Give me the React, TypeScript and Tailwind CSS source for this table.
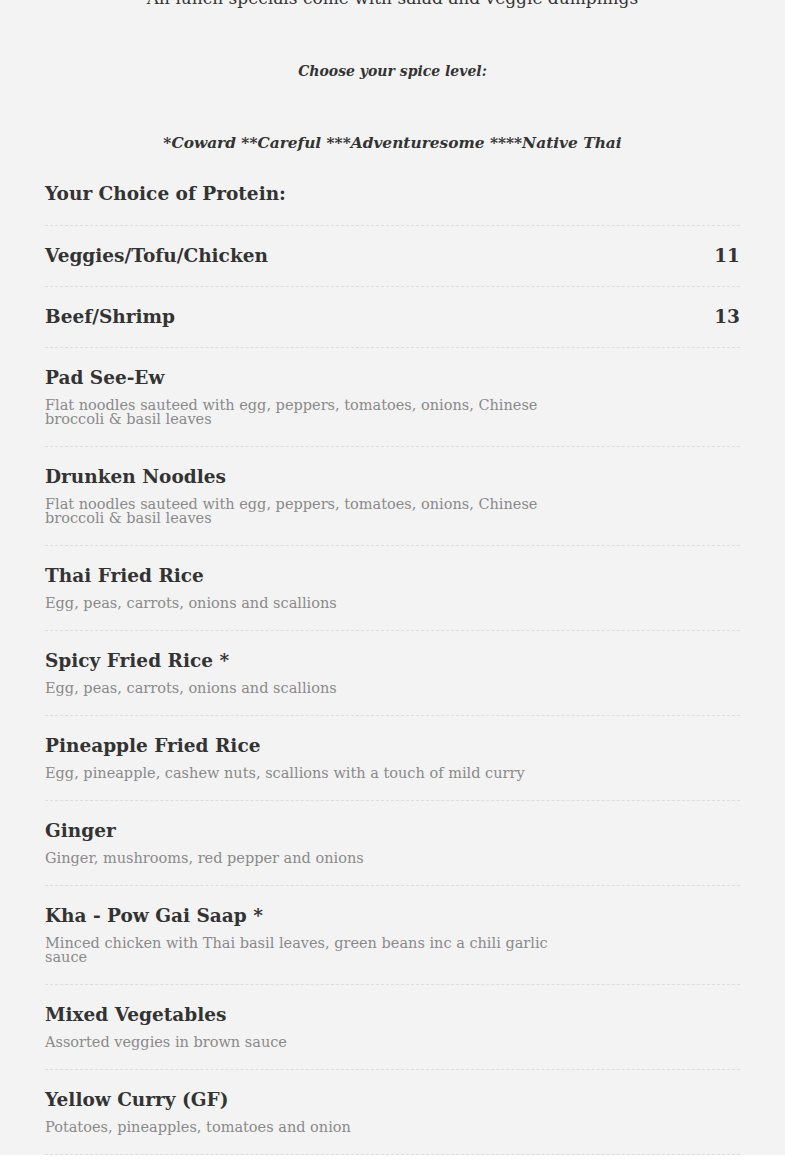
import React from "react";

interface MenuItem {
  name: string;
  desc?: string;
  price?: string;
}

const proteins: MenuItem[] = [
  { name: "Veggies/Tofu/Chicken", price: "11" },
  { name: "Beef/Shrimp", price: "13" },
];

const dishes: MenuItem[] = [
  {
    name: "Pad See-Ew",
    desc: "Flat noodles sauteed with egg, peppers, tomatoes, onions, Chinese broccoli & basil leaves",
  },
  {
    name: "Drunken Noodles",
    desc: "Flat noodles sauteed with egg, peppers, tomatoes, onions, Chinese broccoli & basil leaves",
  },
  { name: "Thai Fried Rice", desc: "Egg, peas, carrots, onions and scallions" },
  { name: "Spicy Fried Rice *", desc: "Egg, peas, carrots, onions and scallions" },
  {
    name: "Pineapple Fried Rice",
    desc: "Egg, pineapple, cashew nuts, scallions with a touch of mild curry",
  },
  { name: "Ginger", desc: "Ginger, mushrooms, red pepper and onions" },
  {
    name: "Kha - Pow Gai Saap *",
    desc: "Minced chicken with Thai basil leaves, green beans inc a chili garlic sauce",
  },
  { name: "Mixed Vegetables", desc: "Assorted veggies in brown sauce" },
  { name: "Yellow Curry (GF)", desc: "Potatoes, pineapples, tomatoes and onion" },
];

function Row({ item }: { item: MenuItem }) {
  return (
    <div className="border-b border-dashed border-[#dcdcdc] pt-[18px] pb-[20px]">
      <div className="flex items-center justify-between">
        <h3 className="text-[18.5px] leading-[24px] font-bold text-[#333]">{item.name}</h3>
        {item.price && (
          <span className="text-[18.5px] leading-[24px] font-bold text-[#333]">{item.price}</span>
        )}
      </div>
      {item.desc && (
        <p className="mt-[8px] max-w-[525px] text-[14.5px] leading-[14px] text-[#8a8a8a]">{item.desc}</p>
      )}
    </div>
  );
}

export default function App() {
  return (
    <div
      className="min-h-screen bg-[#f3f3f3] text-[#333]"
      style={{ fontFamily: '"DejaVu Serif", "Liberation Serif", serif' }}
    >
      <div className="mx-[45px] -mt-[14px]">
        {/* 상단 안내 */}
        <div className="text-center">
          <p className="text-[17px] leading-[24px]">
            All lunch specials come with salad and veggie dumplings
          </p>
          <p className="mt-[49px] text-[14px] leading-[24px] italic font-bold">
            Choose your spice level:
          </p>
          <p className="mt-[48px] text-[15.4px] leading-[24px] italic font-bold">
            *Coward **Careful ***Adventuresome ****Native Thai
          </p>
        </div>

        {/* 메뉴 */}
        <div className="mt-[27px]">
          <div className="border-b border-dashed border-[#dcdcdc] pb-[19px]">
            <h2 className="text-[18.5px] leading-[24px] font-bold">Your Choice of Protein:</h2>
          </div>
          {proteins.map((p) => (
            <div key={p.name} className="border-b border-dashed border-[#dcdcdc] pt-[18px] pb-[18px]">
              <div className="flex items-center justify-between">
                <h3 className="text-[18.5px] leading-[24px] font-bold">{p.name}</h3>
                <span className="text-[18.5px] leading-[24px] font-bold">{p.price}</span>
              </div>
            </div>
          ))}
          {dishes.map((d) => (
            <Row key={d.name} item={d} />
          ))}
        </div>
      </div>
    </div>
  );
}
